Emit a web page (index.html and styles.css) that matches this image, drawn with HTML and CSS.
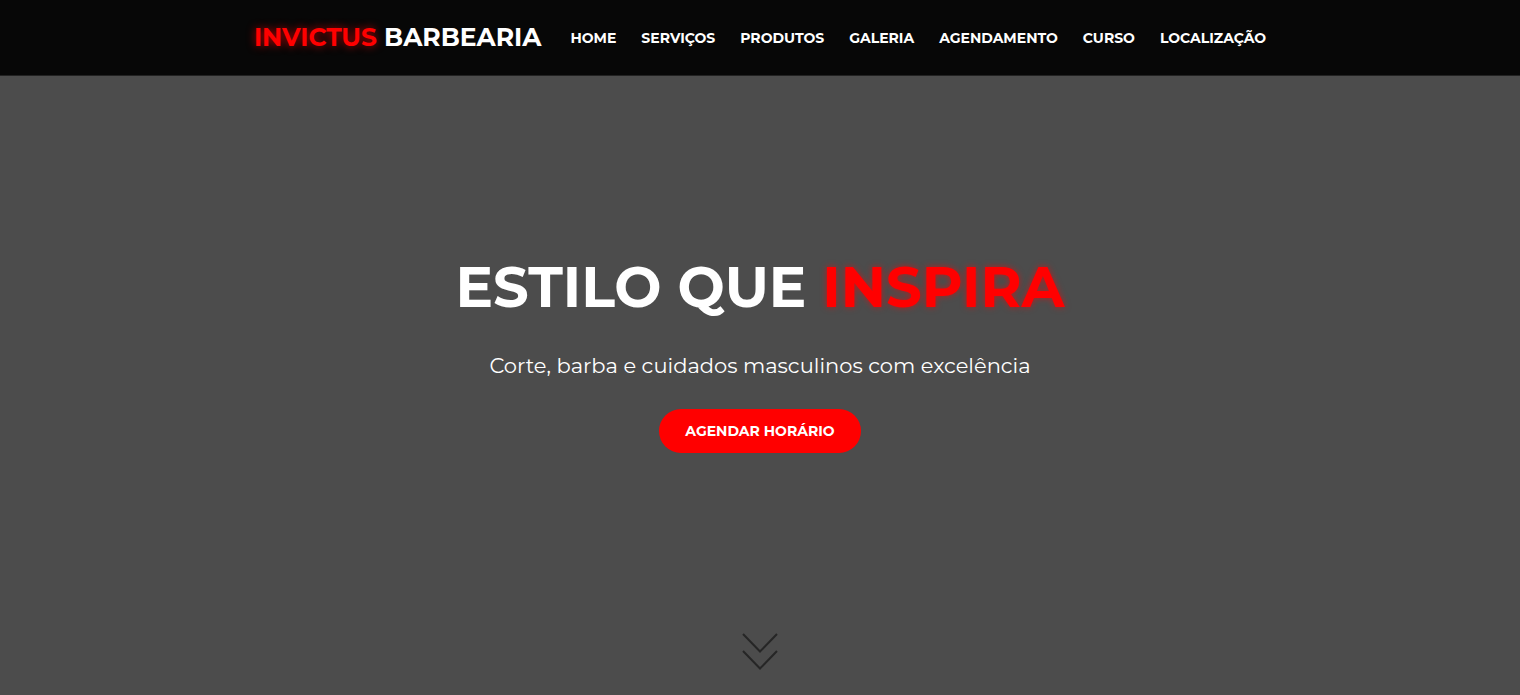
FILE: index.html
```html
<!DOCTYPE html>
<html lang="pt-BR">
<head>
<meta charset="utf-8">
<meta name="viewport" content="width=device-width, initial-scale=1">
<title>Invictus Barbearia</title>
<link rel="stylesheet" href="styles.css">
</head>
<body>
<header class="header">
  <a class="logo" href="#home"><span class="neon">INVICTUS</span> BARBEARIA</a>
  <nav class="nav">
    <a href="#home">HOME</a>
    <a href="#servicos">SERVIÇOS</a>
    <a href="#produtos">PRODUTOS</a>
    <a href="#galeria">GALERIA</a>
    <a href="#agendamento">AGENDAMENTO</a>
    <a href="#curso">CURSO</a>
    <a href="#localizacao">LOCALIZAÇÃO</a>
  </nav>
</header>
<main class="hero" id="home">
  <div class="hero-content">
    <h1 class="title">ESTILO QUE <span class="neon">INSPIRA</span></h1>
    <p class="subtitle">Corte, barba e cuidados masculinos com excelência</p>
    <a class="cta" href="#agendamento">AGENDAR HORÁRIO</a>
  </div>
  <a class="scroll" href="#servicos" aria-label="Rolar para baixo">
    <svg width="36" height="37" viewBox="0 0 36 37" fill="none" stroke="#262626" stroke-width="2" aria-hidden="true">
      <path d="M1 1 18 18.500 35 1M1 18 18 35.500 35 18"/>
    </svg>
  </a>
</main>
</body>
</html>
```
FILE: styles.css
```css
* { box-sizing: border-box; }
body {
  margin: 0;
  min-height: 100vh;
  display: flex;
  flex-direction: column;
  background: #4c4c4c;
  color: #fff;
  font-family: Montserrat, Inter, sans-serif;
}
a { color: inherit; text-decoration: none; }
.header {
  display: flex;
  flex-wrap: wrap;
  justify-content: center;
  align-items: center;
  gap: 12px 29px;
  padding: 22px 24px;
  background: #070707;
  border-bottom: 1px solid #222;
}
.logo {
  font-size: 25px;
  line-height: 31px;
  font-weight: 700;
  white-space: nowrap;
}
.neon { color: #f00; text-shadow: 0 0 8px rgba(255, 0, 0, 0.7); }
.nav {
  display: flex;
  flex-wrap: wrap;
  justify-content: center;
  gap: 8px 25px;
  font-size: 14px;
  line-height: 20px;
  font-weight: 700;
}
.hero {
  flex: 1;
  display: grid;
  grid-template-rows: 1fr auto;
  justify-items: center;
  padding: 0 24px 25px;
}
.hero-content {
  align-self: center;
  padding-bottom: 4px;
  text-align: center;
}
.title {
  margin: 0 0 29px;
  font-size: 56px;
  line-height: 70px;
  font-weight: 700;
}
.title .neon { text-shadow: 0 0 6px rgba(255, 0, 0, 0.6); }
.subtitle {
  margin: 0 0 28px;
  font-size: 21px;
  line-height: 30px;
}
.cta {
  display: inline-block;
  padding: 12px 26px;
  border-radius: 24px;
  background: #f00;
  font-size: 14px;
  line-height: 20px;
  font-weight: 700;
}
.scroll svg { display: block; }
```
